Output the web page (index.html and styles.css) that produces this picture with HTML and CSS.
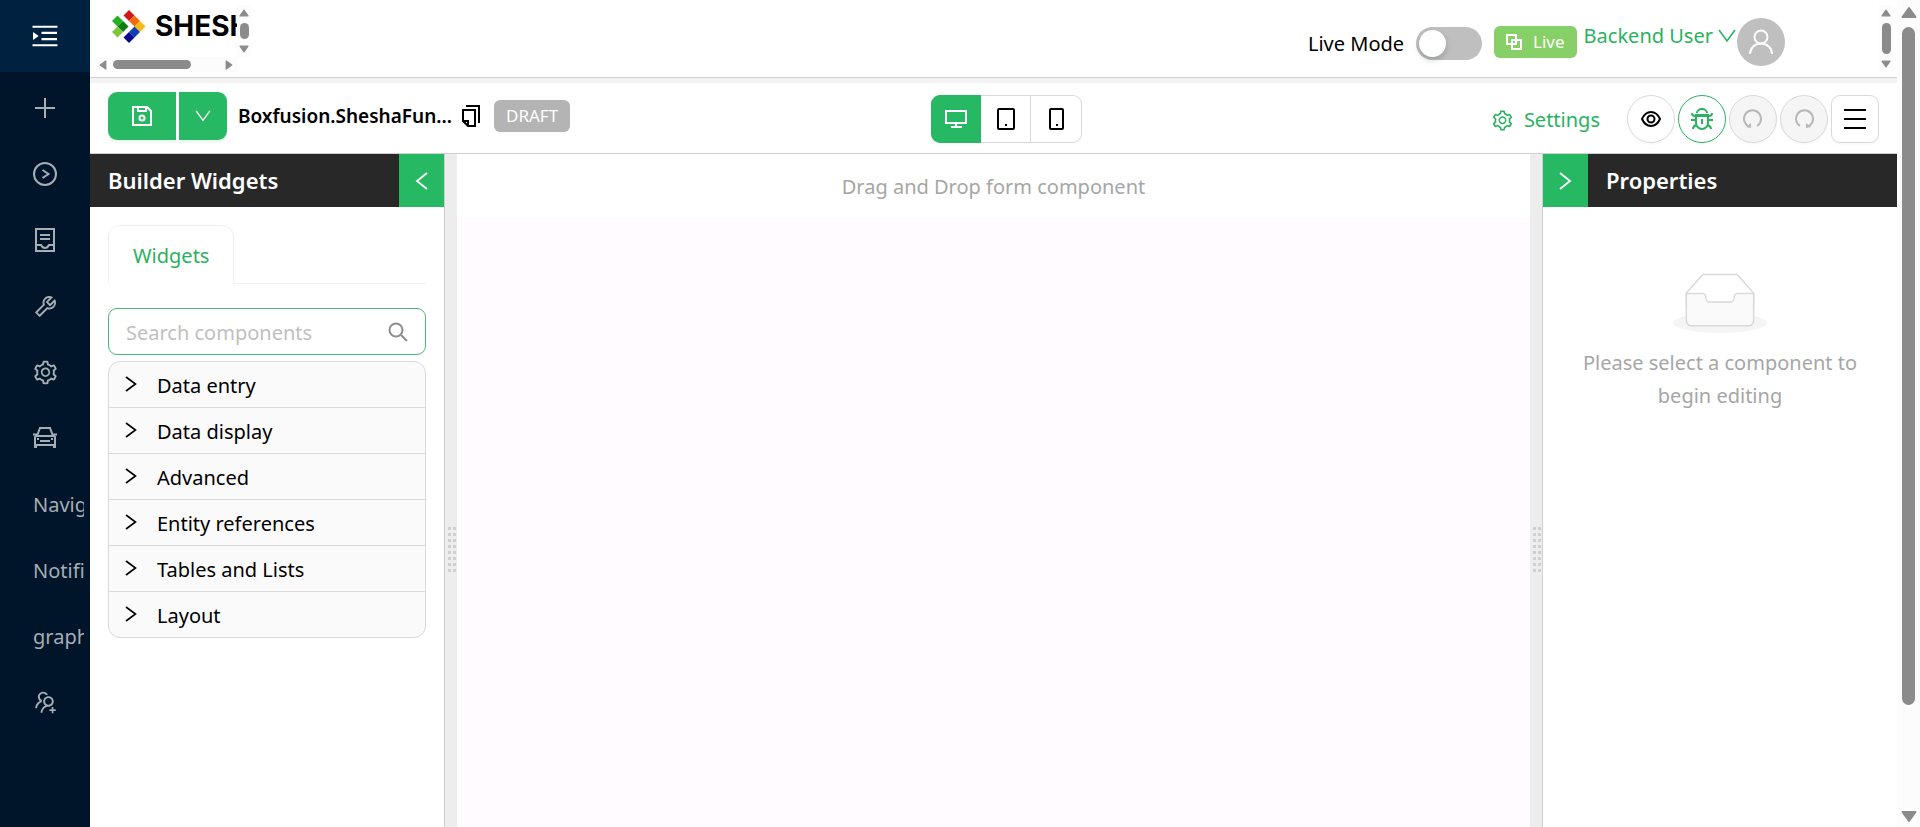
FILE: index.html
```html
<!DOCTYPE html>
<html lang="en">
  <head>
    <meta charset="UTF-8" />
    <meta name="viewport" content="width=device-width, initial-scale=1.0" />
    <title>Form Designer</title>
    <link rel="stylesheet" href="styles.css">
  </head>
  <body>
    <!-- Shared icons -->
    <svg class="sprite" aria-hidden="true">
      <symbol id="i-setting" viewBox="0 0 1024 1024">
        <path d="M924.8 625.7l-65.5-56c3.1-19 4.7-38.4 4.7-57.8s-1.6-38.8-4.7-57.8l65.5-56a32.03 32.03 0 009.3-35.2l-.9-2.6a443.74 443.74 0 00-79.7-137.9l-1.8-2.1a32.12 32.12 0 00-35.1-9.5l-81.3 28.9c-30-24.6-63.5-44-99.7-57.6l-15.7-85a32.05 32.05 0 00-25.8-25.7l-2.7-.5c-52.1-9.4-106.9-9.4-159 0l-2.7.5a32.05 32.05 0 00-25.8 25.7l-15.8 85.4a351.86 351.86 0 00-99 57.4l-81.9-29.1a32 32 0 00-35.1 9.5l-1.8 2.1a446.02 446.02 0 00-79.7 137.9l-.9 2.6c-4.5 12.5-.8 26.5 9.3 35.2l66.3 56.6c-3.1 18.8-4.6 38-4.6 57.1 0 19.2 1.5 38.4 4.6 57.1L99 625.5a32.03 32.03 0 00-9.3 35.2l.9 2.6c18.1 50.4 44.9 96.9 79.7 137.9l1.8 2.1a32.12 32.12 0 0035.1 9.5l81.9-29.1c29.8 24.5 63.1 43.9 99 57.4l15.8 85.4a32.05 32.05 0 0025.8 25.7l2.7.5a449.4 449.4 0 00159 0l2.7-.5a32.05 32.05 0 0025.8-25.7l15.7-85a350 350 0 0099.7-57.6l81.3 28.9a32 32 0 0035.1-9.5l1.8-2.1c34.8-41.1 61.6-87.5 79.7-137.9l.9-2.6c4.5-12.3.8-26.3-9.3-35zM788.3 465.9c2.5 15.1 3.8 30.6 3.8 46.1s-1.3 31-3.8 46.1l-6.6 40.1 74.7 63.9a370.03 370.03 0 01-42.6 73.6L721 702.8l-31.4 25.8c-23.9 19.6-50.5 35-79.3 45.8l-38.1 14.3-17.9 97a377.5 377.5 0 01-85 0l-17.9-97.2-37.8-14.5c-28.5-10.8-55-26.2-78.7-45.7l-31.4-25.9-93.4 33.2c-17-22.9-31.2-47.6-42.6-73.6l75.5-64.5-6.5-40c-2.4-14.9-3.7-30.3-3.7-45.5 0-15.3 1.2-30.6 3.7-45.5l6.5-40-75.5-64.5c11.3-26.1 25.6-50.7 42.6-73.6l93.4 33.2 31.4-25.9c23.7-19.5 50.2-34.9 78.7-45.7l37.9-14.3 17.9-97.2c28.1-3.2 56.8-3.2 85 0l17.9 97 38.1 14.3c28.7 10.8 55.4 26.2 79.3 45.8l31.4 25.8 92.8-32.9c17 22.9 31.2 47.6 42.6 73.6L781.8 426l6.5 39.9zM512 326c-97.2 0-176 78.8-176 176s78.8 176 176 176 176-78.8 176-176-78.8-176-176-176zm79.2 255.2A111.6 111.6 0 01512 614c-29.9 0-58-11.7-79.2-32.8A111.6 111.6 0 01400 502c0-29.9 11.7-58 32.8-79.2C454 401.6 482.1 390 512 390c29.9 0 58 11.6 79.2 32.8A111.6 111.6 0 01624 502c0 29.9-11.7 58-32.8 79.2z" />
      </symbol>
      <symbol id="i-right" viewBox="0 0 12 16">
        <path d="M1 1l9.500 7L1 15" fill="none" stroke="currentColor" stroke-width="1.600" />
      </symbol>
      <symbol id="i-down" viewBox="0 0 18 14">
        <path d="M1 1l8 11 8-11" fill="none" stroke="currentColor" stroke-width="1.600" />
      </symbol>
      <symbol id="i-collapse" viewBox="0 0 13 18">
        <path d="M12 1L2 9l10 8" fill="none" stroke="currentColor" stroke-width="1.800" />
      </symbol>
      <symbol id="i-tri" viewBox="0 0 12 10">
        <path d="M6 1.500L11 8.500H1z" fill="currentColor" stroke="currentColor" stroke-width="1.500" stroke-linejoin="round" />
      </symbol>
    </svg>

    <!-- Side menu -->
    <nav class="sider">
      <button class="trigger" aria-label="Expand menu">
        <svg width="32" height="30" viewBox="0 0 1024 1024" preserveAspectRatio="none"><path d="M408 442h480c4.400 0 8-3.600 8-8v-56c0-4.400-3.600-8-8-8H408c-4.400 0-8 3.600-8 8v56c0 4.400 3.600 8 8 8zm-8 204c0 4.400 3.600 8 8 8h480c4.400 0 8-3.600 8-8v-56c0-4.400-3.600-8-8-8H408c-4.400 0-8 3.600-8 8v56zm504-486H120c-4.400 0-8 3.600-8 8v56c0 4.400 3.600 8 8 8h784c4.400 0 8-3.600 8-8v-56c0-4.400-3.600-8-8-8zm0 632H120c-4.400 0-8 3.600-8 8v56c0 4.400 3.600 8 8 8h784c4.400 0 8-3.600 8-8v-56c0-4.400-3.600-8-8-8zM142.400 642.100L298.700 519a8.840 8.840 0 000-13.900L142.400 381.900c-5.800-4.600-14.400-.5-14.400 6.900v246.300a8.900 8.900 0 0014.400 7z" /></svg>
      </button>
      <ul class="menu">
        <li><a href="#" aria-label="Add">
          <svg class="line" width="24" height="24" viewBox="0 0 24 24"><path d="M12 2v20M2 12h20" /></svg>
        </a></li>
        <li><a href="#" aria-label="Run">
          <svg class="line" width="24" height="24" viewBox="0 0 24 24"><circle cx="12" cy="12" r="11" /><path d="M9.500 8l6 4-6 4" /></svg>
        </a></li>
        <li><a href="#" aria-label="Forms">
          <svg class="line" width="24" height="24" viewBox="0 0 24 24"><path d="M3 1h18v22H3zM7 7h10M7 11h10M3 17h5c1 2 2 3 4 3s3-1 4-3h5" /></svg>
        </a></li>
        <li><a href="#" aria-label="Tools">
          <svg width="27" height="27" viewBox="0 0 1024 1024"><path d="M876.600 239.500c-.5-.9-1.200-1.800-2-2.500-5-5-13.100-5-18.100 0L684.200 409.300l-67.900-67.900L788.700 169c.8-.8 1.400-1.600 2-2.500 3.600-6.100 1.600-13.900-4.500-17.500-98.200-58-226.800-44.700-311.300 39.700-67 67-89.200 162-66.500 247.400l-293 293c-3 3-2.800 7.900.3 11l169.700 169.700c3.100 3.100 8.100 3.300 11 .3l292.900-292.900c85.500 22.800 180.500.7 247.600-66.400 84.400-84.500 97.700-213.100 39.700-311.300zM786 499.800c-58.100 58.100-145.300 69.300-214.600 33.600l-8.800 8.800-.1-.1-274 274.100-79.200-79.200 230.100-230.100s0 .1.100.1l52.800-52.800c-35.700-69.300-24.500-156.500 33.600-214.600a184.200 184.200 0 01144-53.500L537 318.900a32.050 32.050 0 000 45.300l124.500 124.500a32.050 32.050 0 0045.300 0l132.800-132.800c3.700 51.800-14.400 104.800-53.600 143.900z" /></svg>
        </a></li>
        <li><a href="#" aria-label="Settings">
          <svg width="27" height="27"><use href="#i-setting" /></svg>
        </a></li>
        <li><a href="#" aria-label="Vehicles">
          <svg class="line" width="24" height="24" viewBox="0 0 24 24"><path d="M4 10l3-8h10l3 8M0 8.500h4M20 8.500h4M2 22V11l1-1h18l1 1v11M2 19h20M1 21h3M20 21h3M8 14v1h8v-1M4 13h2M18 13h2" /></svg>
        </a></li>
        <li><a href="#"><span>Navigation</span></a></li>
        <li><a href="#"><span>Notifications</span></a></li>
        <li><a href="#"><span>graphs</span></a></li>
        <li><a href="#" aria-label="Add users">
          <svg width="27" height="27" viewBox="0 0 1024 1024"><path d="M892 772h-80v-80c0-4.400-3.600-8-8-8h-48c-4.400 0-8 3.600-8 8v80h-80c-4.400 0-8 3.600-8 8v48c0 4.400 3.600 8 8 8h80v80c0 4.400 3.600 8 8 8h48c4.400 0 8-3.600 8-8v-80h80c4.400 0 8-3.600 8-8v-48c0-4.400-3.600-8-8-8zM373.500 498.400c-.9-8.700-1.400-17.500-1.400-26.400 0-15.900 1.500-31.400 4.300-46.500.7-3.600-1.200-7.300-4.500-8.800-13.600-6.100-26.100-14.500-36.900-25.100a127.540 127.540 0 01-38.700-95.400c.9-32.100 13.800-62.600 36.300-85.600 24.700-25.300 57.900-39.100 93.200-38.700 31.900.3 62.700 12.600 86 34.400 7.900 7.400 14.700 15.600 20.400 24.400 2 3.100 5.900 4.400 9.300 3.200 17.600-6.100 36.200-10.400 55.300-12.400 5.600-.6 8.800-6.600 6.300-11.600-32.500-64.300-98.900-108.700-175.700-109.900-110.800-1.700-203.200 89.200-203.200 200 0 62.800 28.900 118.800 74.200 155.500-31.800 14.700-61.100 35-86.500 60.400-54.800 54.700-85.800 126.900-87.800 204a8 8 0 008 8.200h56.100c4.300 0 7.900-3.400 8-7.700 1.900-58 25.400-112.300 66.700-153.500 29.400-29.400 65.400-49.800 104.700-59.700 3.800-1 6.400-4.800 5.900-8.800zM824 472c0-109.400-87.900-198.300-196.900-200C516.300 270.300 424 361.200 424 472c0 62.800 29 118.800 74.200 155.500a300.950 300.950 0 00-86.400 60.400C357 742.600 326 814.800 324 891.800a8 8 0 008 8.200h56c4.300 0 7.900-3.400 8-7.700 1.900-58 25.400-112.300 66.700-153.500C505.800 695.700 563 672 624 672c110.400 0 200-89.500 200-200zm-109.500 90.500C690.300 586.700 658.200 600 624 600s-66.300-13.300-90.500-37.500a127.260 127.260 0 01-37.500-91.800c.3-32.800 13.400-64.500 36.300-88 24-24.600 56.100-38.300 90.400-38.700 33.900-.3 66.800 12.900 91 36.600 24.800 24.300 38.400 56.800 38.400 91.400-.1 34.200-13.400 66.300-37.600 90.500z" /></svg>
        </a></li>
      </ul>
    </nav>

    <div class="page">
      <!-- Header -->
      <header class="header">
        <div class="logo-box">
          <a class="logo" href="#">
            <svg width="34" height="34" viewBox="0 0 34 34">
              <path d="M17 0l5.500 5.500-5.500 5.500-5.500-5.500z" fill="#d01818" />
              <path d="M22.500 5.500L28 11l-5.500 5.500L17 11z" fill="#f56a0c" />
              <path d="M28 11l5.500 5.500L28 22l-5.500-5.500z" fill="#fdb913" />
              <path d="M22.500 16.500L28 22l-5.500 5.500L17 22z" fill="#0a3fb5" />
              <path d="M17 22l5.500 5.500L17 33l-5.500-5.500z" fill="#0a0a8c" />
              <path d="M5.500 5.500L11 11l-5.500 5.500L0 11z" fill="#27b024" />
              <path d="M11 11l5.500 5.500L11 22l-5.500-5.500z" fill="#0a7d0e" />
              <path d="M5.500 16.500L11 22l-5.500 5.500L0 22z" fill="#7fc63c" />
            </svg>
            <span>SHESHA</span>
          </a>
          <div class="scroll-y">
            <svg class="arrow" width="10" height="8"><use href="#i-tri" /></svg>
            <i class="thumb"></i>
            <svg class="arrow down" width="10" height="8"><use href="#i-tri" /></svg>
          </div>
          <div class="scroll-x">
            <svg class="arrow left" width="10" height="8"><use href="#i-tri" /></svg>
            <i class="thumb"></i>
            <svg class="arrow right" width="10" height="8"><use href="#i-tri" /></svg>
          </div>
        </div>
        <div class="header-right">
          <label class="live-mode">Live Mode
            <input type="checkbox" class="switch" />
          </label>
          <span class="tag-live">
            <svg width="16" height="16" viewBox="0 0 16 16"><path d="M1 1h9v9H1zM6 6h9v9H6z" /></svg>
            Live
          </span>
          <a class="user" href="#">Backend User
            <svg width="18" height="14"><use href="#i-down" /></svg>
          </a>
          <span class="avatar">
            <svg width="24" height="26" viewBox="0 0 24 26"><circle cx="12" cy="8" r="6.500" /><path d="M1 25c0-6 5-10.500 11-10.500S23 19 23 25" /></svg>
          </span>
        </div>
        <div class="scroll-y header-scroll">
          <svg class="arrow" width="10" height="8"><use href="#i-tri" /></svg>
          <i class="thumb"></i>
          <svg class="arrow down" width="10" height="8"><use href="#i-tri" /></svg>
        </div>
      </header>

      <!-- Toolbar -->
      <div class="toolbar">
        <div class="toolbar-left">
          <div class="save-group">
            <button class="save" aria-label="Save">
              <svg width="20" height="20" viewBox="0 0 20 20"><path d="M1 1h14l4 4v14H1zM6 1v4h8V1" /><circle cx="10" cy="12" r="2.500" /></svg>
            </button>
            <button class="save-more" aria-label="More save options">
              <svg width="16" height="12"><use href="#i-down" /></svg>
            </button>
          </div>
          <span class="form-name">Boxfusion.SheshaFun...</span>
          <button class="copy" aria-label="Copy name">
            <svg width="18" height="22" viewBox="0 0 18 22"><path d="M4 1h13v17M1 5h12v16H6l-5-5zM1 16h5v5" /></svg>
          </button>
          <span class="tag-draft">DRAFT</span>
        </div>
        <div class="devices">
          <button class="active" aria-label="Desktop">
            <svg width="22" height="20" viewBox="0 0 22 20"><path d="M1 2h20v12H1zM11 14v4M6 18h11" /></svg>
          </button>
          <button aria-label="Tablet">
            <svg width="18" height="22" viewBox="0 0 18 22"><rect x="1" y="1" width="16" height="20" rx="1" /><path d="M8 17h2" /></svg>
          </button>
          <button aria-label="Mobile">
            <svg width="16" height="22" viewBox="0 0 16 22"><rect x="2" y="1" width="13" height="20" rx="1" /><path d="M8 17h2" /></svg>
          </button>
        </div>
        <div class="toolbar-right">
          <button class="settings">
            <svg width="23" height="23"><use href="#i-setting" /></svg>
            Settings
          </button>
          <div class="actions">
            <button class="round" aria-label="Preview">
              <svg width="20" height="16" viewBox="0 0 20 16"><path d="M1 8c2-4.500 5-7 9-7s7 2.500 9 7c-2 4.500-5 7-9 7s-7-2.500-9-7z" /><circle cx="10" cy="8" r="3.500" /></svg>
            </button>
            <button class="round debug" aria-label="Debug">
              <svg width="22" height="22" viewBox="0 0 22 22"><path d="M5 7h12v8a6 6 0 01-12 0zM6 5a5 4 0 0110 0M11 11v5M1 5c0 2 1 3 3 3h14c2 0 3-1 3-3M0 12h5M17 12h5M2 21c0-2 1-3 3-4M20 21c0-2-1-3-3-4" /></svg>
            </button>
            <button class="round" aria-label="Undo" disabled>
              <svg width="20" height="20" viewBox="0 0 20 20"><path d="M14 17a8.500 8.500 0 10-9 0" /><path d="M3 18l5 1V14z" fill="currentColor" stroke="none" /></svg>
            </button>
            <button class="round" aria-label="Redo" disabled>
              <svg width="20" height="20" viewBox="0 0 20 20"><path d="M6 17a8.500 8.500 0 119 0" /><path d="M17 18l-5 1V14z" fill="currentColor" stroke="none" /></svg>
            </button>
            <button class="round square" aria-label="Menu">
              <svg width="22" height="20" viewBox="0 0 22 20"><path d="M0 1h22M0 10h22M0 19h22" /></svg>
            </button>
          </div>
        </div>
      </div>

      <!-- Designer -->
      <main class="designer">
        <aside class="panel panel-left">
          <div class="panel-head">
            <h2>Builder Widgets</h2>
            <button aria-label="Collapse widgets"><svg width="13" height="18"><use href="#i-collapse" /></svg></button>
          </div>
          <div class="panel-body">
            <div class="tabs" role="tablist">
              <button class="tab" role="tab" aria-selected="true">Widgets</button>
            </div>
            <div class="search">
              <input type="text" placeholder="Search components" aria-label="Search components" />
              <svg width="20" height="20" viewBox="0 0 20 20"><circle cx="8" cy="8" r="6.500" /><path d="M13 13l6 6" /></svg>
            </div>
            <ul class="groups">
              <li><button><svg width="12" height="16"><use href="#i-right" /></svg>Data entry</button></li>
              <li><button><svg width="12" height="16"><use href="#i-right" /></svg>Data display</button></li>
              <li><button><svg width="12" height="16"><use href="#i-right" /></svg>Advanced</button></li>
              <li><button><svg width="12" height="16"><use href="#i-right" /></svg>Entity references</button></li>
              <li><button><svg width="12" height="16"><use href="#i-right" /></svg>Tables and Lists</button></li>
              <li><button><svg width="12" height="16"><use href="#i-right" /></svg>Layout</button></li>
            </ul>
          </div>
        </aside>

        <div class="gutter"><i class="grip"></i></div>

        <section class="canvas">
          <p class="drop-hint">Drag and Drop form component</p>
        </section>

        <div class="gutter"><i class="grip"></i></div>

        <aside class="panel panel-right">
          <div class="panel-head">
            <button aria-label="Collapse properties"><svg class="flip" width="13" height="18"><use href="#i-collapse" /></svg></button>
            <h2>Properties</h2>
          </div>
          <div class="empty">
            <svg width="94" height="60" viewBox="0 0 64 41">
              <ellipse cx="32" cy="34" rx="32" ry="7" fill="#f5f5f5" />
              <g fill="#fff" stroke="#d9d9d9" transform="translate(0 1)">
                <path d="M55 12.760L44.854 1.258C44.367.474 43.656 0 42.907 0H21.093c-.749 0-1.460.474-1.947 1.257L9 12.761V22h46v-9.240z" />
                <path d="M41.613 15.931c0-1.605.994-2.930 2.227-2.931H55v18.137C55 33.260 53.680 35 52.050 35h-40.100C10.320 35 9 33.259 9 31.137V13h11.160c1.233 0 2.227 1.323 2.227 2.928v.022c0 1.605 1.005 2.901 2.237 2.901h14.752c1.232 0 2.237-1.308 2.237-2.913v-.007z" fill="#fafafa" />
              </g>
            </svg>
            <p>Please select a component to begin editing</p>
          </div>
        </aside>
      </main>
    </div>

    <!-- Page scrollbar -->
    <div class="page-scroll">
      <svg class="arrow" width="16" height="13"><use href="#i-tri" /></svg>
      <i class="thumb"></i>
      <svg class="arrow down" width="16" height="13"><use href="#i-tri" /></svg>
    </div>
  </body>
</html>
```

FILE: styles.css
```css
* {
  box-sizing: border-box;
}

body {
  font-family: "Noto Sans", "Open Sans", sans-serif;
  font-size: 20px;
  line-height: 32px;
  color: #000;
  background: #fff;
  margin: 0;
  display: flex;
  height: 100vh;
  overflow: hidden;
}

button,
input {
  font: inherit;
  color: inherit;
  margin: 0;
}

button {
  padding: 0;
  border: none;
  background: none;
  cursor: pointer;
  display: flex;
  align-items: center;
  justify-content: center;
}

a {
  text-decoration: none;
}

ul {
  list-style: none;
  margin: 0;
  padding: 0;
}

h2,
p {
  margin: 0;
}

svg {
  fill: currentColor;
  flex: none;
}

.sprite {
  position: absolute;
  width: 0;
  height: 0;
}

/* side menu */
.sider {
  flex: none;
  width: 90px;
  background: #001529;
  color: #a6adb4;
}

.trigger {
  width: 100%;
  height: 72px;
  background: #002140;
  color: #fff;
}

.menu {
  padding-top: 6px;
}

.menu li {
  height: 60px;
  margin-bottom: 6px;
  padding: 0 6px;
}

.menu a {
  display: flex;
  align-items: center;
  justify-content: center;
  height: 100%;
  color: inherit;
  overflow: hidden;
}

.menu span {
  flex: 1;
  padding: 2px 0 0 27px;
  white-space: nowrap;
  overflow: hidden;
}

.line {
  fill: none;
  stroke: currentColor;
  stroke-width: 2;
}

/* page */
.page {
  flex: 1;
  min-width: 0;
  display: flex;
  flex-direction: column;
}

.header {
  display: flex;
  flex: none;
  height: 83px;
  padding: 5px 4px 0 6px;
  border-bottom: 5px solid #f3f3f3;
  box-shadow: inset 0 -1px #d0d0d0;
}

.logo-box {
  display: grid;
  grid-template-columns: 141px 14px;
  grid-template-rows: 52px 15px;
  height: 67px;
}

.logo {
  display: flex;
  gap: 9px;
  padding: 5px 0 0 16px;
  overflow: hidden;
  color: #000;
  font-family: Inter, sans-serif;
  font-size: 28px;
  font-weight: 700;
}

/* scrollbars */
.arrow {
  color: #8b8b8b;
}

.down {
  transform: rotate(180deg);
}

.left {
  transform: rotate(-90deg);
}

.right {
  transform: rotate(90deg);
}

.thumb {
  background: #8b8b8b;
  border-radius: 8px;
}

.scroll-y,
.scroll-x,
.page-scroll {
  display: flex;
  align-items: center;
  background: #fcfcfc;
}

.scroll-y {
  flex-direction: column;
  justify-content: space-between;
  width: 14px;
  padding: 4px 0;
}

.scroll-y .thumb {
  flex: 1;
  width: 9px;
  margin: 6px 0;
}

.scroll-x {
  padding: 0 3px 0 2px;
}

.scroll-x .thumb {
  width: 78px;
  height: 9px;
  margin: 0 auto 0 5px;
}

.header-scroll {
  height: 67px;
}

.page-scroll {
  flex: none;
  width: 23px;
  flex-direction: column;
  padding: 6px 0 4px;
}

.page-scroll .thumb {
  width: 13px;
  height: 83%;
  margin: 8px 0 auto;
}

.header-right {
  display: flex;
  align-items: flex-start;
  margin-left: auto;
  padding-right: 94px;
}

.live-mode {
  display: flex;
  align-items: center;
  gap: 12px;
  margin: 22px 12px 0 0;
}

.switch {
  appearance: none;
  width: 66px;
  height: 33px;
  padding: 3px;
  border-radius: 17px;
  background: #bfbfbf;
}

.switch::before {
  content: "";
  display: block;
  width: 27px;
  height: 27px;
  border-radius: 50%;
  background: #fff;
  box-shadow: 0 3px 6px rgba(0, 35, 11, 0.2);
}

.switch:checked::before {
  margin-left: auto;
}

.tag-live {
  display: flex;
  align-items: center;
  gap: 11px;
  height: 32px;
  margin-top: 21px;
  padding: 0 12px;
  border-radius: 6px;
  background: #87d068;
  color: #fff;
  font-size: 17px;
}

.tag-live svg {
  fill: none;
  stroke: currentColor;
  stroke-width: 2;
}

.user {
  display: flex;
  align-items: center;
  gap: 5px;
  margin: 15px 1px 0 7px;
  color: #2bb260;
}

.avatar {
  display: flex;
  align-items: center;
  justify-content: center;
  width: 48px;
  height: 48px;
  margin-top: 13px;
  border-radius: 50%;
  background: #bfbfbf;
  color: #fff;
}

.avatar svg {
  fill: none;
  stroke: currentColor;
  stroke-width: 2;
}

/* toolbar */
.toolbar {
  display: grid;
  grid-template-columns: minmax(0, 31fr) auto minmax(0, 30fr);
  align-items: center;
  flex: none;
  height: 71px;
  padding: 2px 18px 0;
  border-bottom: 1px solid #d0d0d0;
}

.toolbar svg {
  stroke: currentColor;
  stroke-width: 2;
  fill: none;
}

.toolbar-left {
  display: flex;
  align-items: center;
  padding-bottom: 6px;
}

.save-group {
  display: flex;
  gap: 3px;
  margin-right: 11px;
  color: #fff;
}

.save,
.save-more {
  height: 48px;
  background: #27b863;
  box-shadow: 0 3px 0 #eefbf3;
}

.save {
  width: 68px;
  border-radius: 9px 0 0 9px;
}

.save-more {
  width: 48px;
  border-radius: 0 9px 9px 0;
}

.form-name {
  font-size: 19px;
  font-weight: 600;
  white-space: nowrap;
}

.copy {
  margin: 0 14px 0 10px;
}

.tag-draft {
  padding: 0 12px;
  border-radius: 6px;
  background: #b4b4b4;
  color: #fff;
  font-size: 17px;
}

.devices {
  display: flex;
  height: 48px;
}

.devices button {
  width: 50px;
  border: 1px solid #d9d9d9;
  border-left: none;
}

.devices .active {
  background: #27b863;
  border-color: #27b863;
  border-radius: 9px 0 0 9px;
  color: #fff;
}

.devices button:last-child {
  width: 51px;
  border-radius: 0 9px 9px 0;
}

.toolbar-right {
  display: flex;
  align-items: center;
  justify-content: flex-end;
  gap: 27px;
}

.settings {
  gap: 10px;
  padding-top: 2px;
  color: #2bb260;
}

.toolbar .settings svg {
  fill: currentColor;
  stroke: none;
}

.actions {
  display: flex;
  gap: 3px;
}

.round {
  width: 48px;
  height: 48px;
  border: 1px solid #d9d9d9;
  border-radius: 50%;
  box-shadow: 0 2px 0 #fafafa;
}

.round:disabled {
  background: #f5f5f5;
  color: #b8b8b8;
}

.debug {
  border-color: #2bb260;
  color: #2bb260;
}

.square {
  border-radius: 9px;
}

/* designer */
.designer {
  flex: 1;
  display: flex;
  min-height: 0;
}

.panel {
  flex: none;
  width: 355px;
}

.panel-left {
  border-right: 1px solid #d0d0d0;
}

.panel-right {
  border-left: 1px solid #d0d0d0;
}

.panel-head {
  display: flex;
  height: 53px;
  background: #282828;
  color: #fff;
}

.panel-head h2 {
  flex: 1;
  padding-left: 18px;
  font-size: 22px;
  font-weight: 600;
  line-height: 53px;
}

.panel-head button {
  width: 45px;
  background: #27b863;
}

.flip {
  transform: scaleX(-1);
}

.panel-body {
  padding: 18px;
}

.tabs {
  display: flex;
  height: 59px;
  margin-bottom: 24px;
  box-shadow: inset 0 -1px #f0f0f0;
}

.tab {
  padding: 2px 24px 0;
  border: 1px solid #f0f0f0;
  border-bottom-color: #fff;
  border-radius: 12px 12px 0 0;
  background: #fff;
  color: #2bb260;
}

.search {
  display: flex;
  align-items: center;
  height: 47px;
  margin-bottom: 6px;
  padding: 0 17px;
  border: 1px solid #4cb878;
  border-radius: 9px;
}

.search input {
  flex: 1;
  min-width: 0;
  padding: 2px 0 0;
  border: none;
  outline: none;
  background: none;
}

.search input::placeholder {
  color: #bfbfbf;
}

.search svg {
  fill: none;
  stroke: #8c8c8c;
  stroke-width: 2;
}

.groups {
  border: 1px solid #d9d9d9;
  border-radius: 12px;
  background: #fafafa;
}

.groups li + li {
  border-top: 1px solid #d9d9d9;
}

.groups button {
  justify-content: flex-start;
  gap: 20px;
  width: 100%;
  height: 45px;
  padding: 2px 0 0 16px;
}

.groups svg {
  margin-bottom: 3px;
}

.gutter {
  flex: none;
  width: 12px;
  padding: 373px 0 0 3px;
  background: #ededed;
}

.grip {
  display: block;
  width: 8px;
  height: 45px;
  background: conic-gradient(at 3px 3px, #ededed 75%, #d0d0d0 0) 0 0 / 5px 6px;
}

.canvas {
  flex: 1;
  min-width: 0;
  background: #fffbff;
}

.drop-hint {
  padding: 17px 0 14px;
  background: #fff;
  color: #a6a6a6;
  text-align: center;
}

.empty {
  padding: 66px 36px 0;
  color: #a6a6a6;
  line-height: 33px;
  text-align: center;
}

.empty svg {
  display: block;
  margin: 0 auto 13px;
}
```
